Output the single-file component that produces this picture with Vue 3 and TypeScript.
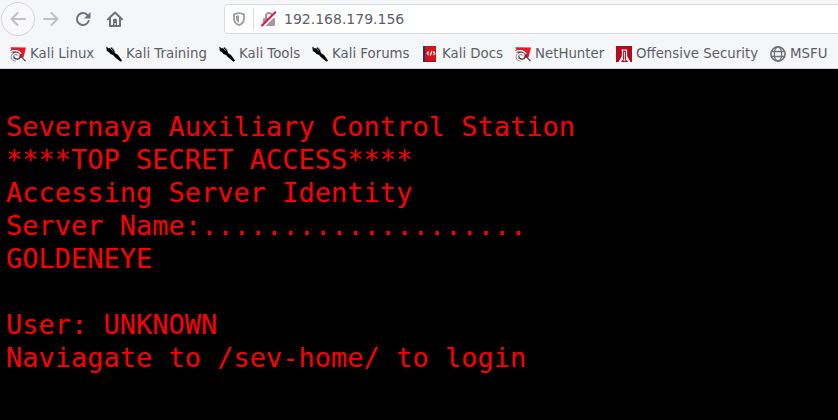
<script setup lang="ts">
type IconName = 'dragon' | 'knife' | 'docs' | 'offsec' | 'globe'

interface Bookmark {
  label: string
  icon: IconName
}

const address = '192.168.179.156'

const bookmarks: Bookmark[] = [
  { label: 'Kali Linux', icon: 'dragon' },
  { label: 'Kali Training', icon: 'knife' },
  { label: 'Kali Tools', icon: 'knife' },
  { label: 'Kali Forums', icon: 'knife' },
  { label: 'Kali Docs', icon: 'docs' },
  { label: 'NetHunter', icon: 'dragon' },
  { label: 'Offensive Security', icon: 'offsec' },
  { label: 'MSFU', icon: 'globe' },
]

const message = [
  'Severnaya Auxiliary Control Station',
  '****TOP SECRET ACCESS****',
  'Accessing Server Identity',
  'Server Name:....................',
  'GOLDENEYE',
  '',
  'User: UNKNOWN',
  'Naviagate to /sev-home/ to login',
].join('\n')
</script>

<template>
  <div class="browser">
    <header class="chrome">
      <div class="toolbar">
        <button class="nav back" aria-label="Back">
          <svg width="16" height="16" viewBox="0 0 16 16"><path d="M15 8H1.500M7.500 2l-6 6 6 6" /></svg>
        </button>
        <button class="nav forward" aria-label="Forward">
          <svg width="16" height="16" viewBox="0 0 16 16"><path d="M1 8h13.500M8.500 2l6 6-6 6" /></svg>
        </button>
        <button class="nav" aria-label="Reload">
          <svg width="16" height="16" viewBox="0 0 16 16">
            <path d="M12.700 4.400A6 6 0 1 0 13.600 10" />
            <path class="solid" d="M15.500 1v6.500H9z" />
          </svg>
        </button>
        <button class="nav" aria-label="Home">
          <svg width="16" height="16" viewBox="0 0 16 16">
            <path d="M1 8.200 8 1.500l7 6.700M3 7v8h10V7" />
            <path class="solid" d="M6 14V9q0-1.500 2-1.500T10 9v5H8.700v-2H7.500v2z" />
          </svg>
        </button>
        <div class="urlbar">
          <svg class="shield" width="14" height="16" viewBox="0 0 14 16">
            <path d="M7 2 12 3.300v4.200c0 3-2 5.500-5 6.600-3-1.100-5-3.600-5-6.600V3.300z" />
            <path class="half" d="M7 4.200v7.700C5.200 11 4 9.200 4 7.300V5z" />
          </svg>
          <span class="divider"></span>
          <svg class="lock" width="16" height="16" viewBox="0 0 16 16">
            <path class="shackle" d="M5 8V5a3 3 0 0 1 6 0v3" />
            <rect x="2" y="7" width="12" height="8" rx="1.300" />
            <path class="gap" d="M2.500 15.500 15.500 2.500" />
            <path class="slash" d="M1 14.500 14.300 1.200" />
          </svg>
          <span class="address">{{ address }}</span>
        </div>
      </div>

      <nav class="bookmarks">
        <a v-for="bookmark in bookmarks" :key="bookmark.label" class="bookmark">
          <svg class="icon" width="16" height="16" viewBox="0 0 16 16">
            <g v-if="bookmark.icon === 'dragon'">
              <path fill="#ed1728" d="M.5 1.300 16 1.600 13.500 11.500l-4 .5L2 6z" />
              <path fill="none" stroke="#55585f" stroke-width="2.600" d="M.5 5.500C4.500 3.800 9 4.500 11 8M9.500 9.500C7.500 6.500 4 7 2.500 9.500c-1.200 2.500.5 4.700 3.500 4.700" />
              <path fill="none" stroke="#f6f7f9" stroke-width="1.500" d="M0 5.700C4.500 3.800 9 4.500 11 8M9.500 9.500C7.500 6.500 4 7 2.500 9.500c-1.200 2.500.5 4.700 3.500 4.700" />
              <path fill="none" stroke="#33363d" stroke-width="1.200" d="M4 10.500c.500 3 5 3.500 6 1M10.500 8.500c.500 3 2.500 4 5 6.500" />
              <path fill="#f6f7f9" d="m6 9 2.500.500 1 1.500-2 .500z" />
            </g>
            <g v-else-if="bookmark.icon === 'knife'">
              <path fill="#000" d="M.300.500 2.800 2.500l2.500-1L8 4l1 3 3 2 1.500 2 2.500 3.500-1.300 1.300-3.200-2.500L8.800 11 7 9 4.500 8 3 6.200.8 5z" />
              <path fill="none" stroke="#d5d6da" stroke-width=".7" d="m4 2.200 2.800 2.500" />
              <path fill="none" stroke="#44464b" stroke-width=".5" d="m5 1 3.500 2.500" />
            </g>
            <g v-else-if="bookmark.icon === 'docs'">
              <path fill="#1d3567" d="M1 0h3v16H1z" />
              <path fill="#dc1017" d="M3 0h11v16H3z" />
              <path fill="#a7101b" d="M3 14.500h11V16H3z" />
              <path fill="none" stroke="#fff" stroke-width="1.200" d="M6.800 5.500 5.200 7.300l1.600 1.800M9.800 5 8.400 9.500M11.200 5.500l1.600 1.800-1.600 1.800" />
            </g>
            <g v-else-if="bookmark.icon === 'offsec'">
              <path fill="#b20b20" d="M0 0h16v16H0z" />
              <path fill="none" stroke="#fff" stroke-width="1.200" d="M5.500 4h5.500M6.500 4v6.500M10.500 4v6.500" />
              <path fill="#fff" d="M6 10h1v3.500L4.700 16H2.500zM11 10h-1v3.500l2.300 2.500h2.200z" />
              <path fill="none" stroke="#f5d5da" stroke-width=".9" d="M8.500 6v7.500" />
              <circle cx="8.500" cy="14" r="1" fill="#fff" />
            </g>
            <g v-else fill="none" stroke="#71747d" stroke-width="1.300">
              <circle cx="8" cy="8" r="7.100" stroke-width="1.700" />
              <ellipse cx="8" cy="8" rx="3.700" ry="7" />
              <path d="M1.500 5.500h13M1.500 10.500h13" />
            </g>
          </svg>
          <span>{{ bookmark.label }}</span>
        </a>
      </nav>
    </header>

    <main class="page">
      <pre class="message">{{ message }}</pre>
    </main>
  </div>
</template>

<style>
body {
  background: #000;
}
</style>

<style scoped>
.browser {
  display: flex;
  flex-direction: column;
  width: 838px;
  height: 420px;
  overflow: hidden;
  font-family: 'DejaVu Sans', sans-serif;
  color: #5b5e68;
}

.chrome {
  box-sizing: border-box;
  height: 69px;
  background: #f5f6f8;
  border-bottom: 1px solid #d2d3d8;
}

.toolbar {
  display: flex;
  align-items: center;
  height: 38px;
}

.nav {
  display: flex;
  flex: none;
  align-items: center;
  justify-content: center;
  box-sizing: border-box;
  width: 32px;
  height: 32px;
  padding: 0;
  border: 0;
  background: none;
}

.nav svg {
  fill: none;
  stroke: #6f727b;
  stroke-width: 2;
  stroke-linecap: round;
  stroke-linejoin: round;
}

.nav .solid {
  fill: #6f727b;
  stroke: none;
}

.nav.back {
  width: 34px;
  height: 34px;
  margin-left: 1px;
  border: 1px solid #d4d5d9;
  border-radius: 50%;
  background: #f9f9fb;
}

.back svg,
.forward svg {
  stroke: #bfc1c6;
}

.urlbar {
  display: flex;
  align-items: center;
  box-sizing: border-box;
  flex: 0 0 630px;
  height: 30px;
  margin-left: 93px;
  padding-left: 7px;
  border: 1px solid #d9dade;
  border-radius: 4px;
  background: #fff;
}

.shield {
  fill: none;
  stroke: #9a9ca2;
  stroke-width: 1.8;
  stroke-linejoin: round;
}

.shield .half {
  fill: #9a9ca2;
  stroke: none;
}

.divider {
  width: 1px;
  height: 22px;
  margin: 0 7px;
  background: #dcdde1;
}

.lock {
  fill: #9a9ca2;
}

.lock path {
  fill: none;
  stroke-width: 2;
}

.lock .shackle {
  stroke: #9a9ca2;
}

.lock .gap {
  stroke: #fff;
}

.lock .slash {
  stroke: #f20d45;
  stroke-linecap: round;
}

.address {
  margin-left: 7px;
  font-size: 14px;
  line-height: 20px;
}

.bookmarks {
  display: grid;
  grid-template-columns: 96px 113px 93px 110px 93px 101px 154px auto;
  align-items: center;
  box-sizing: border-box;
  height: 30px;
  padding: 2px 0 0 10px;
}

.bookmark {
  display: flex;
  align-items: center;
  gap: 4px;
  font-size: 13.333px;
  line-height: 18px;
  white-space: nowrap;
}

.icon {
  flex: none;
}

.page {
  flex: 1;
  padding: 41px 6px 0;
  background: #000;
}

.message {
  margin: 0;
  color: #f00;
  font-family: 'DejaVu Sans Mono', monospace;
  font-size: 27px;
  line-height: 33px;
}
</style>
